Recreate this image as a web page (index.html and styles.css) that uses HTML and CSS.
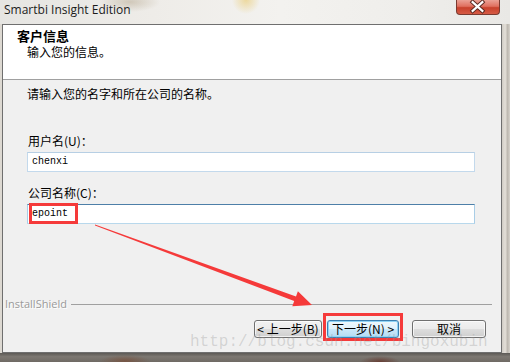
FILE: index.html
```html
<!DOCTYPE html>
<html lang="zh">
<head>
<meta charset="utf-8">
<title>Smartbi Insight Edition</title>
<link rel="stylesheet" href="styles.css">
</head>
<body>
<div class="window">
  <div class="titlebar">
    <span class="title">Smartbi Insight Edition</span>
    <div class="close">
      <svg width="44" height="15" viewBox="0 0 44 15">
        <path d="M17 3 L27 12 M27 3 L17 12" stroke="#5a2a22" stroke-width="4.2" stroke-linecap="square"/>
        <path d="M17 3 L27 12 M27 3 L17 12" stroke="#ffffff" stroke-width="2.2" stroke-linecap="square"/>
      </svg>
    </div>
  </div>
  <div class="frame">
    <div class="dialog">
      <div class="header">
        <div class="h-title">客户信息</div>
        <div class="h-sub">输入您的信息。</div>
      </div>
      <div class="body">
        <div class="form">
          <p class="intro">请输入您的名字和所在公司的名称。</p>
          <div class="lbl lbl-first">用户名(U)：</div>
          <div class="input">chenxi</div>
          <div class="lbl">公司名称(C)：</div>
          <div class="input focused">epoint</div>
        </div>
        <div class="footer">
          <div class="brand"><span class="brand-name">InstallShield</span><span class="rule"></span></div>
          <div class="buttons">
            <button class="btn btn-back">&lt; 上一步(B)</button>
            <button class="btn btn-next">下一步(N) &gt;</button>
            <button class="btn btn-cancel">取消</button>
          </div>
        </div>
      </div>
    </div>
    <div class="edge"></div>
  </div>
  <div class="bottom-strip"></div>
  <svg class="annot" width="510" height="362" viewBox="0 0 510 362">
    <rect x="30.5" y="204.5" width="46" height="18" fill="none" stroke="#f53a3a" stroke-width="3"/>
    <rect x="324.5" y="314.5" width="77" height="25" fill="none" stroke="#f53a3a" stroke-width="3"/>
    <polygon points="95,224.5 296,296.5 297.9,291.3 312,305 292.3,306.3 294.2,301.1 95,225.6" fill="#f53a3a"/>
  </svg>
  <div class="watermark">http://blog.csdn.net/bingoxubin</div>
</div>
</body>
</html>
```
FILE: styles.css
```css
html, body {
  margin: 0;
  padding: 0;
}
body {
  width: 510px;
  height: 362px;
  overflow: hidden;
  background: #d8d4cd;
}
.window {
  position: relative;
  width: 510px;
  height: 362px;
  overflow: hidden;
  display: flex;
  flex-direction: column;
  background: #ddd9d2;
}
.titlebar {
  height: 24px;
  display: flex;
  align-items: flex-start;
  background:
    radial-gradient(circle at 246px 0px, rgba(236,214,150,0.9) 0, rgba(236,214,150,0) 14px),
    radial-gradient(ellipse 30px 10px at 130px 2px, rgba(180,165,140,0.5) 0, rgba(180,165,140,0) 100%),
    linear-gradient(to right, #e6e5e2 0%, #eeece8 30%, #f3f2ef 55%, #efeeeb 80%, #e9e8e5 100%);
}
.title {
  margin: 3px 0 0 4px;
  font-family: "Open Sans", "Noto Sans", sans-serif;
  font-size: 12px;
  line-height: 14px;
  color: #1b1b1b;
}
.close {
  margin-left: auto;
  margin-right: 10px;
  width: 44px;
  height: 15px;
  box-sizing: border-box;
  border: 1px solid #7a3a30;
  border-top: none;
  border-radius: 0 0 4px 4px;
  background: linear-gradient(#eba195 0%, #e0705f 45%, #c8412c 55%, #d65b45 100%);
  display: flex;
}
.close svg {
  margin: -1px 0 0 -1px;
}
.frame {
  height: 329px;
  display: flex;
}
.dialog {
  margin-left: 2px;
  width: 500px;
  height: 329px;
  box-sizing: border-box;
  border: 1px solid #6f6f6f;
  display: flex;
  flex-direction: column;
  font-family: "Noto Sans CJK SC", "Noto Sans", sans-serif;
  font-size: 12px;
  color: #000;
}
.edge {
  flex: 1;
  background: linear-gradient(to right, #cfcbc4 0%, #e4e0d9 40%, #bdb8b0 70%, #d7d3cc 100%);
}
.header {
  height: 51px;
  background: #ffffff;
  border-bottom: 1px solid #a0a0a0;
  padding: 3px 0 0 14px;
}
.h-title {
  font-weight: bold;
  font-size: 13px;
  line-height: 16px;
}
.h-sub {
  margin: 1px 0 0 10px;
  line-height: 14px;
}
.body {
  height: 272px;
  background: #f0f0f0;
  display: flex;
  flex-direction: column;
}
.form {
  padding: 0 24px 0 24px;
  display: flex;
  flex-direction: column;
}
.intro {
  margin: 7px 0 0 0;
  line-height: 14px;
}
.lbl {
  margin: 14px 0 4px 1px;
  line-height: 14px;
}
.lbl-first {
  margin-top: 33px;
}
.input {
  width: 448px;
  height: 20px;
  box-sizing: border-box;
  border: 1px solid #c3d9ec;
  border-top-color: #b7cfe4;
  background: #ffffff;
  font-family: "Liberation Mono", monospace;
  font-size: 10px;
  line-height: 18px;
  padding-left: 4px;
  color: #000;
}
.focused {
  border-color: #a9cde6;
  border-top-color: #4d7fa8;
  border-bottom-color: #b8d8ec;
}
.footer {
  margin-top: auto;
  padding-bottom: 14px;
}
.brand {
  height: 14px;
  display: flex;
  align-items: center;
  padding-left: 2px;
}
.brand-name {
  font-family: "Open Sans", "Noto Sans", sans-serif;
  font-size: 11px;
  line-height: 14px;
  color: #9a9a9a;
  text-shadow: 1px 1px 0 #ffffff;
}
.rule {
  flex: 1;
  height: 1px;
  margin: 0 9px 0 4px;
  background: #a0a0a0;
}
.buttons {
  margin-top: 9px;
  display: flex;
  justify-content: flex-end;
  padding-right: 15px;
}
.btn {
  height: 18px;
  box-sizing: border-box;
  border: 1px solid #707070;
  border-radius: 3px;
  background: linear-gradient(#f2f2f2 0%, #ebebeb 48%, #dddddd 52%, #cfcfcf 100%);
  font-family: "Noto Sans CJK SC", "Noto Sans", sans-serif;
  font-size: 12px;
  line-height: 14px;
  padding: 0;
  color: #000;
  box-shadow: inset 0 0 0 1px rgba(255,255,255,0.7);
}
.btn-back {
  width: 68px;
}
.btn-next {
  width: 72px;
  margin-left: 5px;
  border-color: #3c7fb1;
  background: linear-gradient(#eef8fd 0%, #e0f2fc 48%, #cbe9fa 52%, #b4dcf3 100%);
  box-shadow: inset 0 0 0 1px #8fd3f5;
}
.btn-cancel {
  width: 74px;
  margin-left: 13px;
}
.bottom-strip {
  height: 9px;
  background:
    radial-gradient(ellipse 25px 6px at 125px 8px, rgba(120,80,60,0.8) 0, rgba(120,80,60,0) 100%),
    radial-gradient(ellipse 20px 6px at 380px 9px, rgba(100,50,40,0.8) 0, rgba(100,50,40,0) 100%),
    linear-gradient(#5c5955 0%, #7c7771 40%, #6f6a64 100%);
}
.annot {
  position: absolute;
  left: 0;
  top: 0;
  pointer-events: none;
}
.watermark {
  position: absolute;
  left: 190px;
  top: 337px;
  font-family: "Liberation Mono", monospace;
  font-size: 16px;
  line-height: 11px;
  color: rgba(150,150,150,0.32);
  white-space: nowrap;
  pointer-events: none;
}
```
